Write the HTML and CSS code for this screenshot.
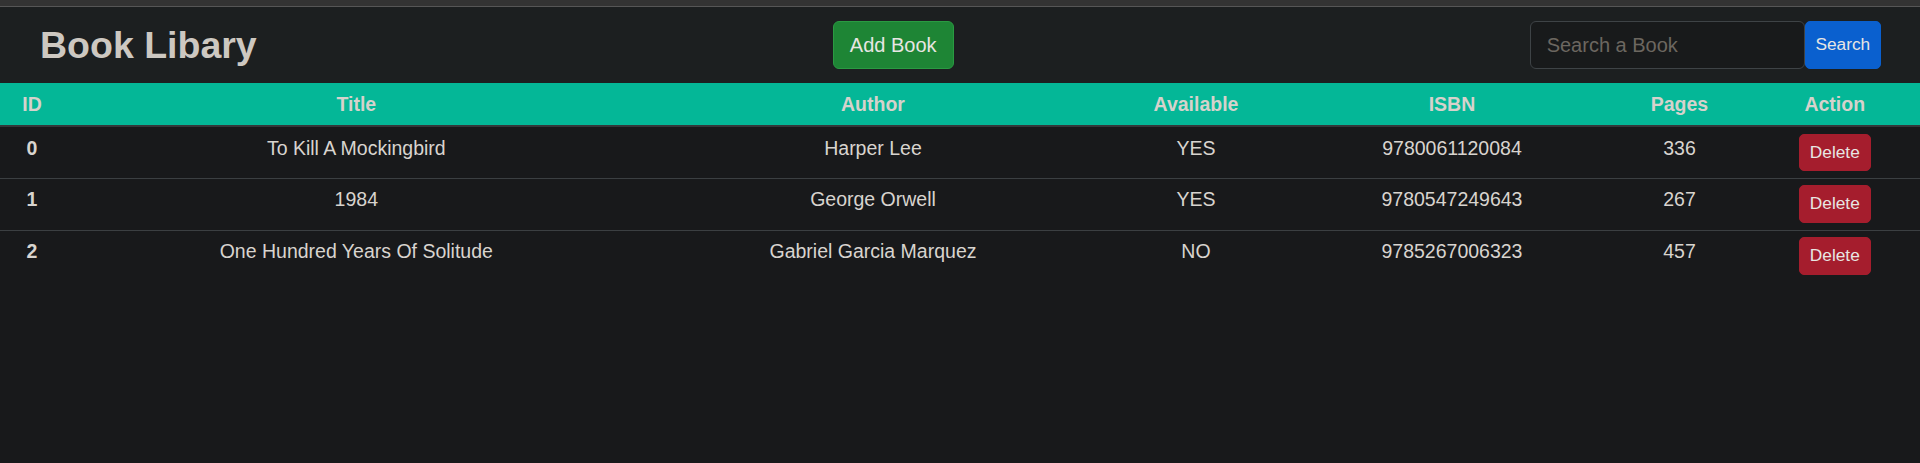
FILE: index.html
```html
<!DOCTYPE html>
<html lang="en">
<head>
<meta charset="utf-8">
<title>Book Libary</title>
<link rel="stylesheet" href="styles.css">
</head>
<body>
<div class="topstrip"></div>
<nav class="navbar">
  <h1 class="brand">Book Libary</h1>
  <button class="btn btn-add" type="button">Add Book</button>
  <form class="search">
    <input class="search-input" type="text" placeholder="Search a Book">
    <button class="btn btn-search" type="button">Search</button>
  </form>
</nav>
<table class="books">
  <colgroup>
    <col class="c-id">
    <col class="c-title">
    <col class="c-author">
    <col class="c-avail">
    <col class="c-isbn">
    <col class="c-pages">
    <col class="c-action">
  </colgroup>
  <thead>
    <tr>
      <th>ID</th>
      <th>Title</th>
      <th>Author</th>
      <th>Available</th>
      <th>ISBN</th>
      <th>Pages</th>
      <th>Action</th>
    </tr>
  </thead>
  <tbody>
    <tr>
      <td class="id">0</td>
      <td>To Kill A Mockingbird</td>
      <td>Harper Lee</td>
      <td>YES</td>
      <td>9780061120084</td>
      <td>336</td>
      <td><button class="btn btn-delete" type="button">Delete</button></td>
    </tr>
    <tr>
      <td class="id">1</td>
      <td>1984</td>
      <td>George Orwell</td>
      <td>YES</td>
      <td>9780547249643</td>
      <td>267</td>
      <td><button class="btn btn-delete" type="button">Delete</button></td>
    </tr>
    <tr>
      <td class="id">2</td>
      <td>One Hundred Years Of Solitude</td>
      <td>Gabriel Garcia Marquez</td>
      <td>NO</td>
      <td>9785267006323</td>
      <td>457</td>
      <td><button class="btn btn-delete" type="button">Delete</button></td>
    </tr>
  </tbody>
</table>
</body>
</html>
```
FILE: styles.css
```css
* { box-sizing: border-box; }

html, body {
  margin: 0;
  padding: 0;
}

body {
  background: #18191b;
  color: #d8d4cf;
  font-family: "Liberation Sans", Arial, sans-serif;
}

.topstrip {
  height: 7px;
  background: #333333;
  border-bottom: 1px solid #565656;
}

.navbar {
  height: 76px;
  background: #1c1f20;
  display: flex;
  align-items: center;
  justify-content: space-between;
  padding: 0 39px 0 40px;
}

.brand {
  margin: 0;
  font-size: 37.5px;
  font-weight: bold;
  line-height: 1.2;
  color: #cdc8c1;
}

.btn {
  font-family: "Liberation Sans", Arial, sans-serif;
  cursor: pointer;
  line-height: 1.5;
}

.btn-add {
  font-size: 20px;
  padding: 8px 16px;
  border: 1px solid #2a9a42;
  border-radius: 6px;
  background: #1e8535;
  color: #e8e6e3;
}

.search {
  display: flex;
  margin: 0;
}

.search-input {
  width: 275px;
  height: 48px;
  font-family: "Liberation Sans", Arial, sans-serif;
  font-size: 20px;
  line-height: 1.5;
  padding: 8px 16px;
  background: #181a1b;
  border: 1px solid #3e4346;
  border-radius: 6px;
  color: #d8d4cf;
  outline: none;
}

.search-input::placeholder {
  color: #6c6760;
}

.btn-search {
  height: 48px;
  font-size: 17.3px;
  padding: 0 9.8px;
  border: 1px solid #0a60cf;
  border-radius: 5px;
  background: #0a60cf;
  color: #e8e6e3;
}

.books {
  width: 100%;
  border-collapse: collapse;
  table-layout: fixed;
  font-size: 19.5px;
}

.c-id { width: 64px; }
.c-title { width: 584.6px; }
.c-author { width: 448.8px; }
.c-avail { width: 197.2px; }
.c-isbn { width: 314.8px; }
.c-pages { width: 140.2px; }

.books thead tr {
  background: #04b797;
  border-bottom: 2px solid #33383a;
}

.books th {
  padding: 8px;
  line-height: 26px;
  font-weight: bold;
  color: #d6d2cc;
  text-align: center;
}

.books tbody tr {
  border-bottom: 1px solid #3b3f42;
}

.books tbody tr:last-child {
  border-bottom: none;
}

.books td {
  padding: 6.5px 8px;
  line-height: 1.5;
  vertical-align: top;
  text-align: center;
  color: #d8d4cf;
}

.books td.id {
  font-weight: bold;
}

.btn-delete {
  display: inline-block;
  vertical-align: top;
  font-size: 17.3px;
  padding: 5px 10.2px;
  border: 1px solid #a51d2d;
  border-radius: 5px;
  background: #a51d2d;
  color: #e8e6e3;
}
```
